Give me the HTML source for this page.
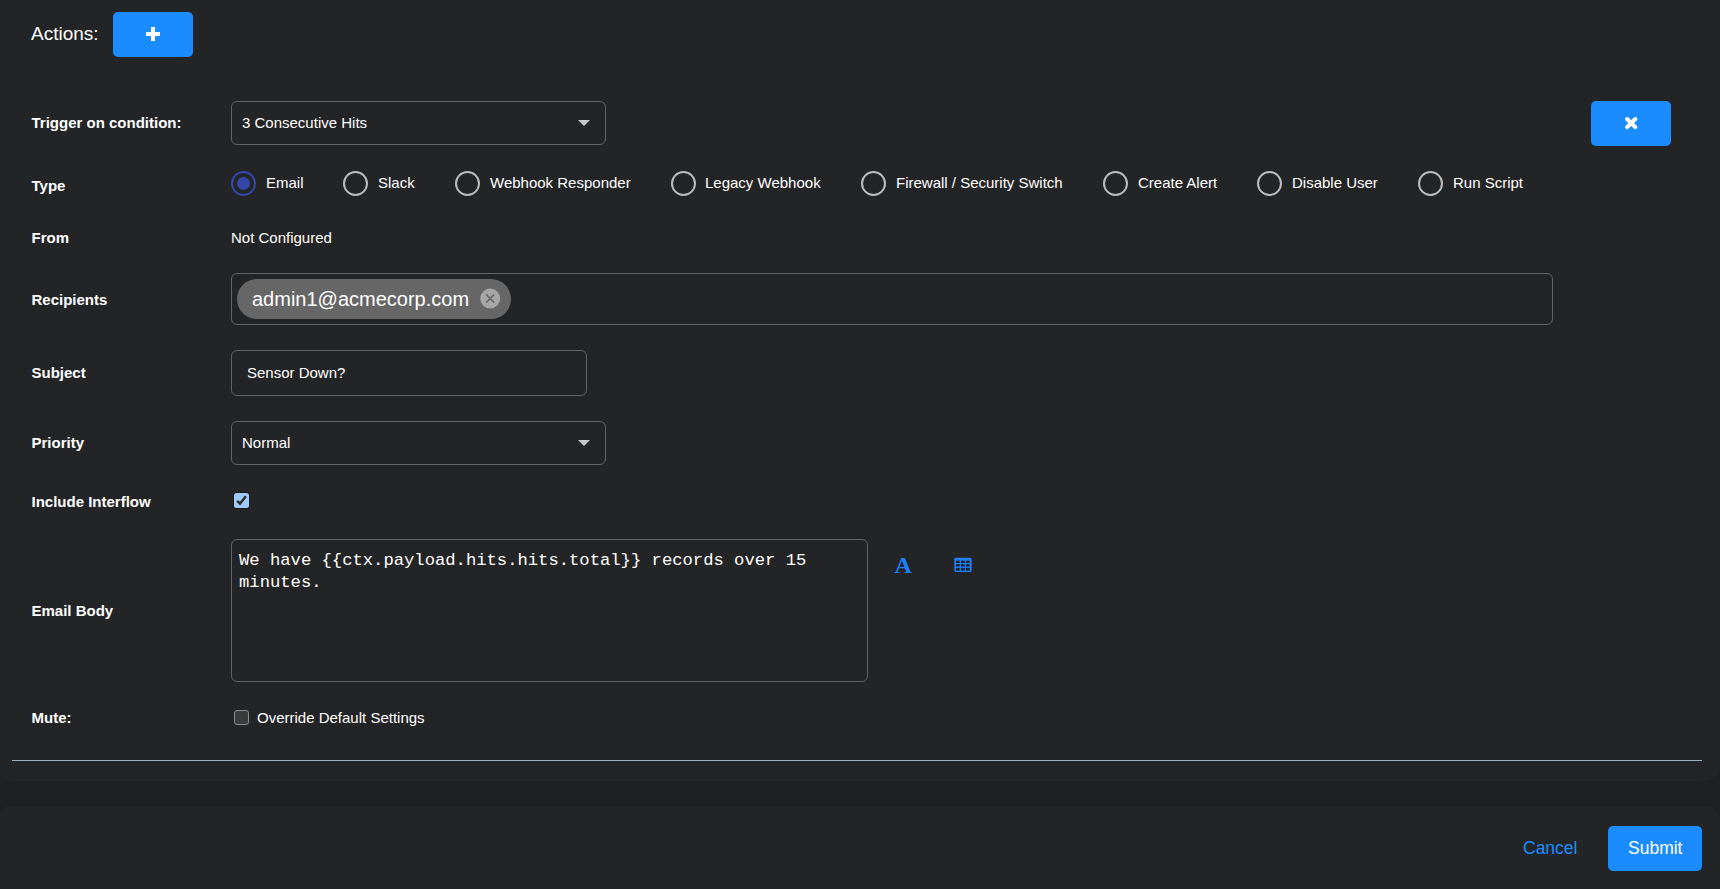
<!DOCTYPE html>
<html><head><meta charset="utf-8">
<style>
html,body{margin:0;padding:0;}
body{width:1720px;height:889px;overflow:hidden;background:#1f2022;position:relative;font-family:"Liberation Sans",sans-serif;color:#fff;}
.p{position:absolute;background:#232426;border-radius:18px;}
.t{position:absolute;white-space:nowrap;line-height:1;}
.lbl{font-weight:bold;font-size:15px;left:31.5px;color:#fff;}
.v{font-size:15px;}
.box{position:absolute;box-sizing:border-box;border:1px solid #616466;border-radius:6px;}
.btn{position:absolute;background:#1a8cff;border-radius:5px;}
.radio{position:absolute;box-sizing:border-box;width:25px;height:25px;border:2px solid #bdbdbd;border-radius:50%;top:171px;}
.arrow{position:absolute;width:0;height:0;border-left:6px solid transparent;border-right:6px solid transparent;border-top:6px solid #c8c8c8;}
</style></head><body>
<div class="p" style="left:-6px;top:-10px;width:1727px;height:791px;"></div>
<div class="p" style="left:-6px;top:806px;width:1727px;height:120px;"></div>

<!-- Actions -->
<div class="t" style="left:31px;top:24px;font-size:19px;">Actions:</div>
<div class="btn" style="left:113px;top:12px;width:80px;height:45px;">
  <svg width="80" height="45" style="position:absolute;left:0;top:0"><rect x="33" y="20" width="14" height="4" fill="#fff"/><rect x="38" y="15" width="4" height="14" fill="#fff"/></svg>
</div>

<!-- Trigger -->
<div class="t lbl" style="top:115px;">Trigger on condition:</div>
<div class="box" style="left:231px;top:101px;width:375px;height:44px;"></div>
<div class="t v" style="left:242px;top:115px;">3 Consecutive Hits</div>
<div class="arrow" style="left:578px;top:120px;"></div>
<div class="btn" style="left:1591px;top:101px;width:80px;height:45px;">
  <svg width="80" height="45" style="position:absolute;left:0;top:0"><path d="M36.1 18 L44.3 26.2 M44.3 18 L36.1 26.2" stroke="#fff" stroke-width="4" stroke-linecap="round"/></svg>
</div>

<!-- Type -->
<div class="t lbl" style="top:178px;">Type</div>
<div class="radio" style="left:231px;border-color:#3546ab;"><div style="position:absolute;left:4px;top:4px;width:13px;height:13px;border-radius:50%;background:#3546ab;"></div></div>
<div class="t v" style="left:266px;top:175px;">Email</div>
<div class="radio" style="left:343px;"></div>
<div class="t v" style="left:378px;top:175px;">Slack</div>
<div class="radio" style="left:455px;"></div>
<div class="t v" style="left:490px;top:175px;">Webhook Responder</div>
<div class="radio" style="left:671px;"></div>
<div class="t v" style="left:705px;top:175px;">Legacy Webhook</div>
<div class="radio" style="left:861px;"></div>
<div class="t v" style="left:896px;top:175px;">Firewall / Security Switch</div>
<div class="radio" style="left:1103px;"></div>
<div class="t v" style="left:1138px;top:175px;">Create Alert</div>
<div class="radio" style="left:1257px;"></div>
<div class="t v" style="left:1292px;top:175px;">Disable User</div>
<div class="radio" style="left:1418px;"></div>
<div class="t v" style="left:1453px;top:175px;">Run Script</div>

<!-- From -->
<div class="t lbl" style="top:230px;">From</div>
<div class="t v" style="left:231px;top:230px;">Not Configured</div>

<!-- Recipients -->
<div class="t lbl" style="top:292px;">Recipients</div>
<div class="box" style="left:231px;top:273px;width:1322px;height:52px;"></div>
<div style="position:absolute;left:237px;top:279px;width:274px;height:40px;border-radius:20px;background:#666;"></div>
<div class="t" style="left:252px;top:289px;font-size:20px;">admin1@acmecorp.com</div>
<svg style="position:absolute;left:480px;top:288px" width="21" height="21"><circle cx="10.2" cy="10.5" r="10" fill="#a6a6a6"/><path d="M6.2 6.5 L14.2 14.5 M14.2 6.5 L6.2 14.5" stroke="#5f5f5f" stroke-width="1.5"/></svg>

<!-- Subject -->
<div class="t lbl" style="top:365px;">Subject</div>
<div class="box" style="left:231px;top:350px;width:356px;height:46px;"></div>
<div class="t v" style="left:247px;top:365px;">Sensor Down?</div>

<!-- Priority -->
<div class="t lbl" style="top:435px;">Priority</div>
<div class="box" style="left:231px;top:421px;width:375px;height:44px;"></div>
<div class="t v" style="left:242px;top:435px;">Normal</div>
<div class="arrow" style="left:578px;top:440px;"></div>

<!-- Include Interflow -->
<div class="t lbl" style="top:494px;">Include Interflow</div>
<svg style="position:absolute;left:232px;top:491px" width="19" height="19"><rect x="1.5" y="1.5" width="16" height="16" rx="3" fill="#141414"/><rect x="2" y="2" width="15" height="15" rx="2.5" fill="#9ccafb"/><path d="M5.2 9.8 L8 12.6 L13.9 5.3" stroke="#2e2e2e" stroke-width="2.5" fill="none"/></svg>

<!-- Email Body -->
<div class="t lbl" style="top:603px;">Email Body</div>
<div class="box" style="left:231px;top:539px;width:637px;height:143px;"></div>
<div style="position:absolute;left:239px;top:550px;font-family:'Liberation Mono',monospace;font-size:17.2px;line-height:22px;white-space:pre;">We have {{ctx.payload.hits.hits.total}} records over 15
minutes.</div>
<div class="t" style="left:894.5px;top:553px;font-family:'Liberation Serif',serif;font-weight:bold;font-size:24px;color:#1e80ff;">A</div>
<svg style="position:absolute;left:954px;top:557px" width="19" height="17"><rect x="0.3" y="0.7" width="17.3" height="14.4" rx="1.6" fill="#1e80ff"/><g fill="#232426"><rect x="1.9" y="3.7" width="3.9" height="2.3"/><rect x="6.9" y="3.7" width="3.9" height="2.3"/><rect x="11.9" y="3.7" width="3.8" height="2.3"/><rect x="1.9" y="7.2" width="3.9" height="2.3"/><rect x="6.9" y="7.2" width="3.9" height="2.3"/><rect x="11.9" y="7.2" width="3.8" height="2.3"/><rect x="1.9" y="10.9" width="3.9" height="2.8"/><rect x="6.9" y="10.9" width="3.9" height="2.8"/><rect x="11.9" y="10.9" width="3.8" height="2.8"/></g></svg>

<!-- Mute -->
<div class="t lbl" style="top:710px;">Mute:</div>
<svg style="position:absolute;left:233px;top:709px" width="17" height="17"><rect x="1.5" y="1.5" width="14" height="14" rx="2.5" fill="#3b3b3b" stroke="#8a8a8a" stroke-width="1"/></svg>
<div class="t v" style="left:257px;top:710px;">Override Default Settings</div>

<!-- separator -->
<div style="position:absolute;left:12px;top:760px;width:1690px;height:1px;background:#9bb1bf;"></div>

<!-- footer -->
<div class="t" style="left:1523px;top:840px;font-size:17.5px;color:#1a8cff;">Cancel</div>
<div class="btn" style="left:1608px;top:826px;width:94px;height:45px;"></div>
<div class="t" style="left:1628px;top:840px;font-size:17.5px;">Submit</div>
</body></html>
